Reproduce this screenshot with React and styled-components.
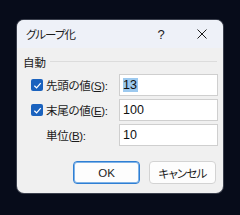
import React from 'react'
import styled, { createGlobalStyle } from 'styled-components'

const GlobalStyle = createGlobalStyle`
    html, body {
        margin: 0;
        padding: 0;
        background: #070c1a;
    }
    body {
        font-family: "Noto Sans CJK JP", "Noto Sans", sans-serif;
        font-feature-settings: "palt";
    }
`

const Screen = styled.div`
    width: 240px;
    height: 215px;
    padding: 20px 0 0 17px;
    box-sizing: border-box;
`

const Dialog = styled.div`
    width: 206px;
    height: 173px;
    background: #f0f0f0;
    border-radius: 7px;
    overflow: hidden;
    display: flex;
    flex-direction: column;
    box-shadow: 0 0 0 1px #3a3f4c;
`

const TitleBar = styled.div`
    height: 28px;
    flex-shrink: 0;
    background: #eef1f8;
    display: flex;
    align-items: center;
    gap: 5px;
    padding-left: 9px;
`

const Title = styled.div`
    flex: 1;
    font-size: 11.5px;
    color: #1c1c1c;
    letter-spacing: -1px;
`

const TitleButton = styled.div`
    width: ${props => props.wide ? '42px' : '30px'};
    height: 28px;
    display: flex;
    align-items: center;
    justify-content: center;
    font-family: "Liberation Sans", sans-serif;
    font-size: 13px;
    color: #1c1c1c;
`

const Body = styled.div`
    flex: 1;
    display: flex;
    flex-direction: column;
    padding: 5px 5px 0 6px;
`

const GroupHeader = styled.div`
    display: flex;
    align-items: center;
    gap: 4px;
    height: 17px;
    font-size: 11.5px;
    color: #1c1c1c;

    &::after {
        content: '';
        flex: 1;
        height: 1px;
        background: #dcdcdc;
        margin-right: 1px;
        margin-top: -1px;
    }
`

const Rows = styled.div`
    display: flex;
    flex-direction: column;
    gap: 3px;
    margin-top: 4px;
`

const Row = styled.div`
    display: grid;
    grid-template-columns: 15px 73px 99px;
    align-items: center;
    padding-left: 8px;
    height: 22px;
`

const Check = styled.div`
    width: 12px;
    height: 12px;
    border-radius: 2px;
    background: #1a62be;
    display: flex;
    align-items: center;
    justify-content: center;
`

const Label = styled.div`
    font-size: 11.5px;
    color: #1c1c1c;
    white-space: nowrap;
    letter-spacing: -0.3px;
`

const Key = styled.span`
    font-family: "Liberation Sans", sans-serif;
    text-decoration: underline;
    text-underline-offset: 1px;
`

const Paren = styled.span`
    font-family: "Liberation Sans", sans-serif;
`

const Field = styled.div`
    height: 22px;
    box-sizing: border-box;
    background: #ffffff;
    border: 1px solid #cfcfcf;
    display: flex;
    align-items: center;
    padding-left: 3px;
    font-family: "Liberation Sans", sans-serif;
    font-size: 12.5px;
    color: #111;
`

const Selected = styled.span`
    background: #9cc9ef;
    padding: 0 1px 0 0;
`

const Footer = styled.div`
    display: flex;
    justify-content: flex-end;
    gap: 9px;
    padding: 15px 2px 0 0;
`

const Button = styled.div`
    width: 67px;
    height: 23px;
    box-sizing: border-box;
    border-radius: 4px;
    background: #fdfdfd;
    border: 1px solid ${props => props.primary ? '#2f7fd4' : '#d3d3d3'};
    box-shadow: ${props => props.primary ? 'inset 0 0 0 1px #7fb2e6' : 'none'};
    display: flex;
    align-items: center;
    justify-content: center;
    font-size: 11.5px;
    letter-spacing: ${props => props.primary ? '0' : '-0.8px'};
    color: #1c1c1c;
    font-family: ${props => props.primary ? '"Liberation Sans", sans-serif' : 'inherit'};
`

function CheckMark() {
    return (
        <svg width="9" height="9" viewBox="0 0 10 10">
            <path d="M1.5 5.2 L4 7.6 L8.6 2.4" fill="none" stroke="#fff" strokeWidth="1.4" />
        </svg>
    )
}

function CloseIcon() {
    return (
        <svg width="10" height="10" viewBox="0 0 10 10">
            <path d="M0.5 0.5 L9.5 9.5 M9.5 0.5 L0.5 9.5" stroke="#1c1c1c" strokeWidth="1" />
        </svg>
    )
}

export default function App() {
    return (
        <Screen>
            <GlobalStyle />
            <Dialog>

                {/* TITLE BAR */}
                <TitleBar>
                    <Title>グループ化</Title>
                    <TitleButton>?</TitleButton>
                    <TitleButton wide><CloseIcon /></TitleButton>
                </TitleBar>

                <Body>
                    <GroupHeader>自動</GroupHeader>

                    <Rows>
                        <Row>
                            <Check><CheckMark /></Check>
                            <Label>先頭の値<Paren>(</Paren><Key>S</Key><Paren>):</Paren></Label>
                            <Field><Selected>13</Selected></Field>
                        </Row>
                        <Row>
                            <Check><CheckMark /></Check>
                            <Label>末尾の値<Paren>(</Paren><Key>E</Key><Paren>):</Paren></Label>
                            <Field>100</Field>
                        </Row>
                        <Row>
                            <span />
                            <Label>単位<Paren>(</Paren><Key>B</Key><Paren>):</Paren></Label>
                            <Field>10</Field>
                        </Row>
                    </Rows>

                    {/* BUTTONS */}
                    <Footer>
                        <Button primary>OK</Button>
                        <Button>キャンセル</Button>
                    </Footer>
                </Body>
            </Dialog>
        </Screen>
    )
}
